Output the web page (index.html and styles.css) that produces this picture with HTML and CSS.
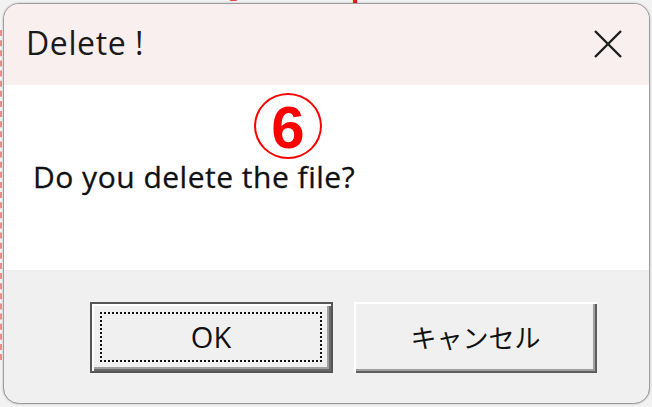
FILE: index.html
```html
<!DOCTYPE html>
<html>
<head>
<meta charset="utf-8">
<link rel="stylesheet" href="styles.css">
</head>
<body>
<div class="desk">
  <div class="bgtext">Click button ④ to display the ⑤</div>
  <div class="bgmarks"></div>
  <div class="dialog">
    <div class="titlebar">
      <span class="title">Delete !</span>
      <svg class="close" width="28" height="28" viewBox="0 0 28 28">
        <path d="M1 1 L27 27 M27 1 L1 27" stroke="#1f1f1f" stroke-width="2.4" fill="none"/>
      </svg>
    </div>
    <div class="content">
      <div class="marker"><span class="num">6</span></div>
      <p class="msg">Do you delete the file?</p>
    </div>
    <div class="footer">
      <button class="btn default"><span class="focus">OK</span></button>
      <button class="btn"><span class="label">キャンセル</span></button>
    </div>
  </div>
</div>
</body>
</html>
```

FILE: styles.css
```css
* { box-sizing: border-box; }
html, body { margin: 0; padding: 0; }
body { width: 652px; height: 407px; overflow: hidden; background: #f2f2f2; }
.desk {
  position: relative;
  width: 652px;
  height: 407px;
  padding: 3px 2px 3px 3px;
  overflow: hidden;
}
.bgtext {
  position: absolute;
  left: 12px;
  top: -27px;
  width: 350px;
  overflow: hidden;
  font-family: "Liberation Sans", Arial, sans-serif;
  font-weight: bold;
  font-size: 30px;
  line-height: 34px;
  color: #e01818;
  letter-spacing: 2px;
  white-space: nowrap;
}
.bgmarks {
  position: absolute;
  left: 0;
  top: 30px;
  width: 2px;
  height: 330px;
  border-left: 2px dashed rgba(220, 60, 60, 0.55);
}
.dialog {
  position: relative;
  width: 647px;
  height: 401px;
  border: 1px solid #9c9c9c;
  border-radius: 16px;
  overflow: hidden;
  background: #f0f0f0;
  display: flex;
  flex-direction: column;
  box-shadow: 0 0 2px rgba(0,0,0,0.3);
}
.titlebar {
  height: 81px;
  background: #f9efee;
  display: flex;
  align-items: center;
  justify-content: space-between;
  padding: 0 27px 4px 22px;
}
.title {
  font-family: "Open Sans", "Noto Sans", sans-serif;
  font-size: 32px;
  letter-spacing: 0.6px;
  color: #1a1a1a;
  line-height: 1;
}
.close { display: block; margin-top: 2px; }
.content {
  height: 185px;
  background: #ffffff;
  padding: 8px 0 0 29px;
}
.marker {
  width: 68px;
  height: 66px;
  margin-left: 221px;
  border: 2px solid #f00;
  border-radius: 50%;
  display: flex;
  align-items: center;
  justify-content: center;
}
.num {
  font-family: "Liberation Sans", Arial, sans-serif;
  font-weight: bold;
  font-size: 60px;
  line-height: 1;
  color: #f00;
  margin-top: 3px;
}
.msg {
  margin: 3px 0 0 0;
  font-family: "Open Sans", "Noto Sans", sans-serif;
  font-size: 30px;
  letter-spacing: 0.5px;
  line-height: 30px;
  color: #111;
  -webkit-text-stroke: 0.3px #111;
}
.footer {
  flex: 1;
  display: flex;
  justify-content: flex-end;
  align-items: flex-start;
  gap: 21px;
  padding: 32px 52px 0 0;
}
.btn {
  width: 243px;
  height: 71px;
  background: #f0f0f0;
  border: none;
  padding: 0;
  margin: 0;
  display: flex;
  align-items: center;
  justify-content: center;
  font-family: "Open Sans", "Noto Sans CJK JP", sans-serif;
  font-size: 29px;
  color: #111;
  box-shadow: inset 2px 2px 0 #ffffff, inset -2px -2px 0 #5e5e5e, inset -4px -4px 0 #a0a0a0;
}
.btn .label {
  font-family: "Noto Sans CJK JP", sans-serif;
  font-size: 26px;
  line-height: 1;
  margin-top: -2px;
}
.btn.default {
  border: 2px solid #555;
  box-shadow: inset 2px 2px 0 #ffffff, inset -2px -2px 0 #6a6a6a, inset -4px -4px 0 #a0a0a0;
  padding: 8px 9px 9px 8px;
}
.focus {
  display: flex;
  align-items: center;
  justify-content: center;
  width: 100%;
  height: 100%;
  border: 2px dotted #111;
  line-height: 1;
  padding-bottom: 2px;
}
```
